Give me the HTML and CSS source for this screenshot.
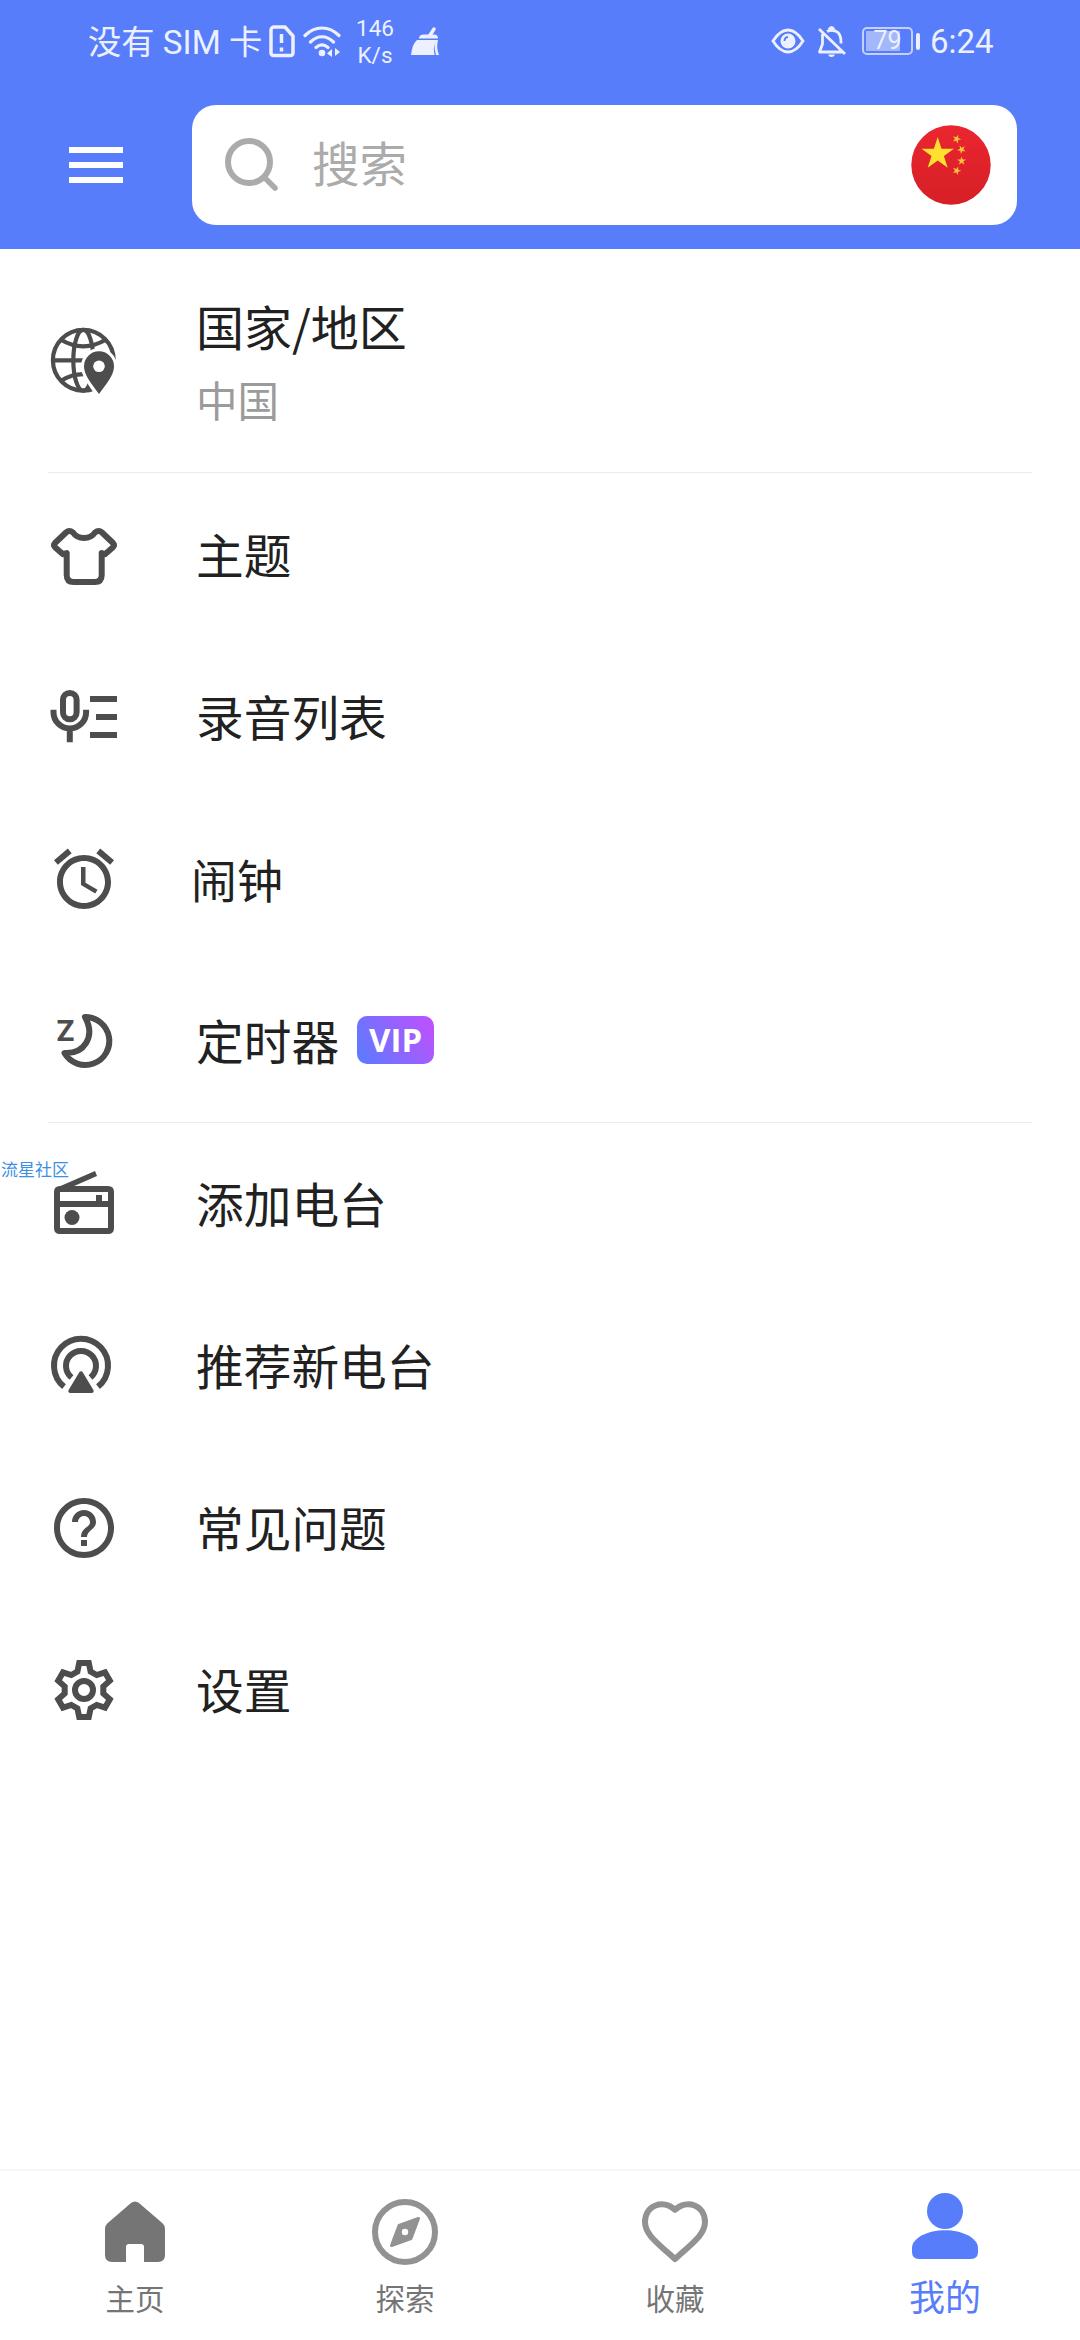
FILE: index.html
```html
<!doctype html>
<html lang="zh-CN">
 <head>
	<meta charset="UTF-8">
	<title>我的</title>
	<link rel="stylesheet" href="styles.css">
 </head>
 <body>
	<div class="top">
		<div class="status">
			<span class="carrier">没有 SIM 卡</span>
			<svg class="st_sim" width="26" height="34" viewBox="0 0 26 34" fill="none" stroke="#ecf0ff" stroke-width="3.500">
				<path d="M5 3h11l8 9v17a2.500 2.500 0 0 1-2.500 2.500H4.500A2.500 2.500 0 0 1 2 29V6a3 3 0 0 1 3-3z"/>
				<path d="M12.500 10v9M12.500 23.500v4" />
			</svg>
			<svg class="st_wifi" width="38" height="34" viewBox="0 0 38 34" fill="none" stroke="#ecf0ff" stroke-width="3.200" stroke-linecap="round">
				<path d="M2 11.500c10-10 24-10 34 0M7.500 18c7-7 16-7 23 0M13 23.500c4-3.500 8-3.500 12 0"/>
				<circle cx="19" cy="29" r="3.300" fill="#ecf0ff" stroke="none"/>
				<path d="M24 29.500l5-4.500v8zM37 28l-5-4v8z" fill="#ecf0ff" stroke="none"/>
			</svg>
			<span class="speed">146<br>K/s</span>
			<svg class="st_broom" width="29" height="32" viewBox="0 0 29 32">
				<path d="M23 4l-4.500 7" stroke="#ecf0ff" stroke-width="3.500" stroke-linecap="round"/>
				<path d="M8 13.500q0-4 5-4h10q4 0 4 4zM6 15h21q-2 8 1 15h-3q-2-6-1.500-12-1.500 6 0 12H0Q1 19.500 6 15z" fill="#ecf0ff"/>
			</svg>
			<svg class="st_eye" width="34" height="28" viewBox="0 0 34 28">
				<path d="M2 14Q9 3 17 3t15 11Q25 25 17 25T2 14z" fill="none" stroke="#ecf0ff" stroke-width="2.800"/>
				<circle cx="17" cy="14" r="7.500" fill="#ecf0ff"/>
				<path d="M13.500 14q0-3.500 3.500-4" fill="none" stroke="#587dfb" stroke-width="1.800"/>
			</svg>
			<svg class="st_bell" width="30" height="33" viewBox="0 0 30 33" fill="none" stroke="#ecf0ff" stroke-width="2.800">
				<path d="M2 4l26 25M5.500 9v10L2.500 27H25M10 6.500q6-3 11 1 3 3 3 10v1" stroke-linejoin="round"/>
				<path d="M12 4.500q2.500-4 5 0" /><path d="M11 29.500h7q-1 2.500-3.500 2.500T11 29.500z" fill="#ecf0ff" stroke="none"/>
			</svg>
			<span class="battery"><b>79</b></span>
			<i class="battery_cap"></i>
			<span class="clock">6:24</span>
		</div>
		<div class="bar">
			<div class="menu_btn"><i></i><i></i><i></i></div>
			<div class="search">
				<svg width="56" height="56" viewBox="0 0 56 56" fill="none" stroke="#ababab">
					<circle cx="25" cy="25" r="21" stroke-width="6"/>
					<path d="M41 41l10 10" stroke-width="5.500" stroke-linecap="round"/>
				</svg>
				<span class="hint">搜索</span>
				<svg class="flag" width="80" height="80" viewBox="0 0 80 80">
					<defs>
						<linearGradient id="red" x1="0" y1="0" x2="0" y2="1"><stop offset="0" stop-color="#ea2630"/><stop offset="1" stop-color="#d61f26"/></linearGradient>
						<path id="star" d="M0-17L3.800-5.300 16.200-5.300 6.200 2 10 13.800 0 6.500-10 13.800-6.200 2-16.200-5.300-3.800-5.300z"/>
					</defs>
					<circle cx="40" cy="40" r="39.700" fill="url(#red)"/>
					<use href="#star" transform="translate(26.700 29)" fill="#ffe02e"/>
					<g fill="#fbc33c">
						<use href="#star" transform="translate(45.700 14) rotate(20) scale(.27)"/>
						<use href="#star" transform="translate(50.600 24.500) rotate(45) scale(.27)"/>
						<use href="#star" transform="translate(50.600 36) scale(.27)"/>
						<use href="#star" transform="translate(45.700 45.700) rotate(20) scale(.27)"/>
					</g>
				</svg>
			</div>
		</div>
	</div>

	<div class="list">
		<div class="item country">
			<svg width="72" height="72" viewBox="0 0 72 72">
				<g fill="none" stroke="#4d4d4d" stroke-width="4.200">
					<circle cx="35.300" cy="35.300" r="30.400"/>
					<ellipse cx="35.300" cy="35.300" rx="10" ry="30.400"/>
					<path d="M5 35.300h40M12.500 14.500q22.800 13.600 45.600 0M12.500 56q22.800-13.600 45.600 0"/>
				</g>
				<path d="M51 70C44 60 36 50 36 41.300a15 15 0 0 1 30 0C66 50 58 60 51 70z" fill="#fff" stroke="#fff" stroke-width="6"/>
				<path d="M62 35h8v30h-8z" fill="#fff"/>
				<path d="M51 69C43 58 36 50 36 41.300a15 15 0 0 1 30 0C66 50 59 58 51 69z" fill="#4d4d4d"/>
				<circle cx="51" cy="41.300" r="5.800" fill="#fff"/>
			</svg>
			<div class="two_line">
				<span class="name">国家/地区</span>
				<span class="sub">中国</span>
			</div>
		</div>
		<div class="line"></div>
		<div class="group">
			<div class="item">
				<svg width="72" height="72" viewBox="0 0 72 72" fill="none" stroke="#4d4d4d" stroke-width="6" stroke-linejoin="round" stroke-linecap="round">
					<path d="M18.700 34v22q0 7 7 7h21q7 0 7-7V34l3.300 1.200 8-7q2-2 0-4.200L54 13.500q-3.300-3-7 0Q43.500 19 36 19T25 13.500q-3.700-3-7 0L7 24q-2 2.200 0 4.200l8 7z"/>
				</svg>
				<span class="name">主题</span>
			</div>
			<div class="item">
				<svg width="72" height="72" viewBox="0 0 72 72" fill="none" stroke="#4d4d4d" stroke-width="6">
					<rect x="15" y="12" width="13.600" height="26.300" rx="6.800"/>
					<path d="M5.500 28.700v2.500a16.300 16.300 0 0 0 32.600 0v-2.500M21.800 47v14.300M42 18h27M48 36h21M42 54h27"/>
				</svg>
				<span class="name">录音列表</span>
			</div>
			<div class="item alarm">
				<svg width="72" height="72" viewBox="0 0 24 24" fill="#4d4d4d">
					<path d="M22 5.720l-4.600-3.860-1.290 1.530 4.600 3.860L22 5.720zM7.880 3.390L6.600 1.860 2 5.710l1.290 1.530 4.590-3.850zM12.500 8H11v6l4.750 2.850.75-1.230-4-2.370V8zM12 4c-4.970 0-9 4.030-9 9s4.020 9 9 9c4.970 0 9-4.030 9-9s-4.030-9-9-9zm0 16c-3.870 0-7-3.130-7-7s3.130-7 7-7 7 3.130 7 7-3.130 7-7 7z"/>
				</svg>
				<span class="name">闹钟</span>
			</div>
			<div class="item">
				<svg width="72" height="72" viewBox="0 0 72 72">
					<text class="zz" x="8.500" y="36">Z</text>
					<path d="M37 12A24 24 0 1 1 16.500 48C36 49 48 32 37 12z" fill="none" stroke="#4d4d4d" stroke-width="6" stroke-linejoin="round"/>
				</svg>
				<span class="name">定时器</span>
				<span class="vip">VIP</span>
			</div>
		</div>
		<div class="line"></div>
		<div class="group_last">
			<div class="item">
				<svg width="72" height="72" viewBox="0 0 72 72" fill="#4d4d4d">
					<path d="M9 19.500L47 3l2 5-24 10.500z"/>
					<path d="M12 18h48q6 0 6 6v36q0 6-6 6H12q-6 0-6-6V24q0-6 6-6zm0 6v9h36v-6h6v6h6v-9zm0 15v21h48V39z" fill-rule="evenodd"/>
					<circle cx="24" cy="49.500" r="7.500"/>
				</svg>
				<span class="name">添加电台</span>
			</div>
			<div class="item">
				<svg width="72" height="72" viewBox="0 0 72 72" fill="none" stroke="#4d4d4d" stroke-width="6">
					<path d="M16 56.700a27 27 0 1 1 34 0M23.500 47.500a15 15 0 1 1 19 0"/>
					<path d="M33 43.300L22.300 61h21.400z" fill="#4d4d4d" stroke-width="4" stroke-linejoin="round"/>
				</svg>
				<span class="name">推荐新电台</span>
			</div>
			<div class="item">
				<svg width="72" height="72" viewBox="0 0 24 24" fill="#4d4d4d">
					<path d="M11 18h2v-2h-2v2zm1-16C6.480 2 2 6.480 2 12s4.480 10 10 10 10-4.480 10-10S17.520 2 12 2zm0 18c-4.410 0-8-3.590-8-8s3.590-8 8-8 8 3.590 8 8-3.590 8-8 8zm0-14c-2.210 0-4 1.790-4 4h2c0-1.100.9-2 2-2s2 .9 2 2c0 2-3 1.750-3 5h2c0-2.250 3-2.500 3-5 0-2.210-1.790-4-4-4z"/>
				</svg>
				<span class="name">常见问题</span>
			</div>
			<div class="item">
				<svg width="72" height="72" viewBox="0 0 72 72" fill="none" stroke="#4d4d4d" stroke-width="6">
					<path d="M31.200 9h9.600l1.800 8.500 6.100 3.500 8.300-2.700 4.800 8.400-6.500 5.800v7l6.500 5.800-4.800 8.400-8.300-2.700-6.100 3.500-1.800 8.500h-9.600l-1.800-8.500-6.100-3.500-8.300 2.700-4.800-8.400 6.500-5.800v-7l-6.500-5.800 4.800-8.400 8.300 2.700 6.100-3.500z"/>
					<circle cx="36" cy="36" r="9"/>
				</svg>
				<span class="name">设置</span>
			</div>
		</div>
	</div>

	<div class="tabs">
		<div class="tab">
			<svg width="72" height="72" viewBox="0 0 72 72" fill="#757575">
				<path d="M13 66q-7 0-7-7V33q0-3.500 2.500-5.700L32 7q4-3 8 0l23.500 20.300Q66 29.500 66 33v26q0 7-7 7H45V51q0-3-3-3H30q-3 0-3 3v15z"/>
			</svg>
			<span>主页</span>
		</div>
		<div class="tab">
			<svg width="72" height="72" viewBox="0 0 72 72">
				<circle cx="36" cy="36" r="30" fill="none" stroke="#929292" stroke-width="6"/>
				<path d="M49.500 22.500L30 29.500 22.500 49.500 42 42.500z" fill="#929292" stroke="#929292" stroke-width="3" stroke-linejoin="round"/>
				<circle cx="36" cy="36" r="3.200" fill="#fff"/>
			</svg>
			<span>探索</span>
		</div>
		<div class="tab">
			<svg width="72" height="72" viewBox="0 0 72 72" fill="none" stroke="#929292" stroke-width="6" stroke-linejoin="round">
				<path d="M36 13.700C24 3 6 9 6 26c0 12 11 20 30 37 19-17 30-25 30-37C66 9 48 3 36 13.700z"/>
			</svg>
			<span>收藏</span>
		</div>
		<div class="tab on">
			<svg width="72" height="72" viewBox="0 0 72 72" fill="#587dfb">
				<circle cx="36" cy="21" r="18"/>
				<path d="M10 69q-7 0-7-7v-4c0-10 16-17.700 33-17.700S69 48 69 58v4q0 7-7 7z"/>
			</svg>
			<span>我的</span>
		</div>
	</div>
	<div class="mark">流星社区</div>
 </body>
</html>
```
FILE: styles.css
```css
*{box-sizing:border-box}
body{
	margin:0;
	width:1080px;height:2340px;
	background:#fff;
	display:flex;
	flex-direction:column;
	font-family:"Noto Sans CJK SC",sans-serif;
	color:#212121;
	overflow:hidden;
}
svg{display:block;flex:none}

/* 顶部 */
.top{
	height:249px;
	background:#587dfb;
}
.status{
	height:82px;
	padding-left:88px;
	display:flex;
	align-items:center;
	color:#ecf0ff;
	font-family:Roboto,"Noto Sans CJK SC",sans-serif;
}
.carrier{
	padding-top:3px;
	font-size:33.300px;
	line-height:40px;
	width:181px;
	white-space:nowrap;
}
.st_sim{margin-right:8px}
.st_wifi{margin-right:15px}
.speed{
	width:38px;
	padding-top:1px;
	font-size:22.500px;
	line-height:27px;
	text-align:center;
	margin-right:17px;
}
.st_eye{margin-left:331px;margin-right:12px}
.st_bell{margin-right:15px}
.battery{
	width:51px;height:28px;
	border:2px solid #c4d1ff;
	border-radius:5px;
	padding:2px;
	display:flex;
	background:linear-gradient(#a3b7fd,#a3b7fd) 2px 2px/34px 20px no-repeat;
}
.battery b{
	width:43px;
	font-weight:400;
	font-size:25px;
	line-height:20px;
	text-align:center;
}
.battery_cap{
	width:4px;height:17px;
	margin:0 10px 0 3px;
	border-radius:2px;
	background:#ecf0ff;
}
.clock{
	padding-top:2px;
	font-size:33px;
	line-height:40px;
}

.bar{
	display:flex;
	align-items:center;
	padding:23px 63px 0 69px;
}
.menu_btn{
	width:123px;
	display:flex;
	flex-direction:column;
	gap:9px;
}
.menu_btn i{
	width:54px;height:6px;
	background:#fff;
}
.search{
	flex:1;
	height:120px;
	border-radius:24px;
	background:#fff;
	display:flex;
	align-items:center;
	padding:0 26px 0 32px;
}
.hint{
	flex:1;
	margin-left:32px;
	padding-bottom:7px;
	font-size:47.500px;
	line-height:60px;
	color:#ababab;
}

/* 列表 */
.list{flex:1}
.item{
	height:162px;
	padding-left:48px;
	display:flex;
	align-items:center;
}
.country{height:223px}
.name{
	margin-left:76px;
	padding-bottom:2px;
	font-size:47.700px;
	line-height:60px;
}
.alarm .name{
	margin-left:71px;
	font-size:46px;
}
.two_line{
	display:flex;
	flex-direction:column;
	gap:16px;
}
.two_line .name{
	padding:0;
	font-size:48px;
}
.sub{
	margin-left:76px;
	font-size:41.500px;
	line-height:56px;
	color:#9b9b9b;
}
.line{
	height:1px;
	margin:0 48px;
	background:#ebebeb;
}
.group{padding-top:1px}
.zz{
	font-family:Roboto,sans-serif;
	font-size:29.500px;
	font-weight:700;
	fill:#4d4d4d;
}
.vip{
	width:77px;height:48px;
	margin:0 0 2px 18px;
	border-radius:10px;
	background:linear-gradient(60deg,#587dff,#c24fff);
	color:#fff;
	font-family:"Open Sans",sans-serif;
	font-size:33px;
	font-weight:700;
	line-height:48px;
	text-align:center;
}

/* 底部导航 */
.tabs{
	height:171px;
	border-top:2px solid #f7f7f7;
	display:flex;
}
.tab{
	flex:1;
	padding-top:25px;
	display:flex;
	flex-direction:column;
	align-items:center;
	color:#757575;
	font-size:29.500px;
	line-height:40px;
}
.tab span{margin-top:9px}
.on{
	padding-top:19px;
	color:#587dfb;
	font-size:36px;
	line-height:44px;
}
.on span{margin-top:11px}

/* 水印盖在列表上面 */
.mark{
	position:absolute;
	left:1px;top:1157px;
	font-size:17px;
	line-height:24px;
	color:#3d8fe6;
}
```
